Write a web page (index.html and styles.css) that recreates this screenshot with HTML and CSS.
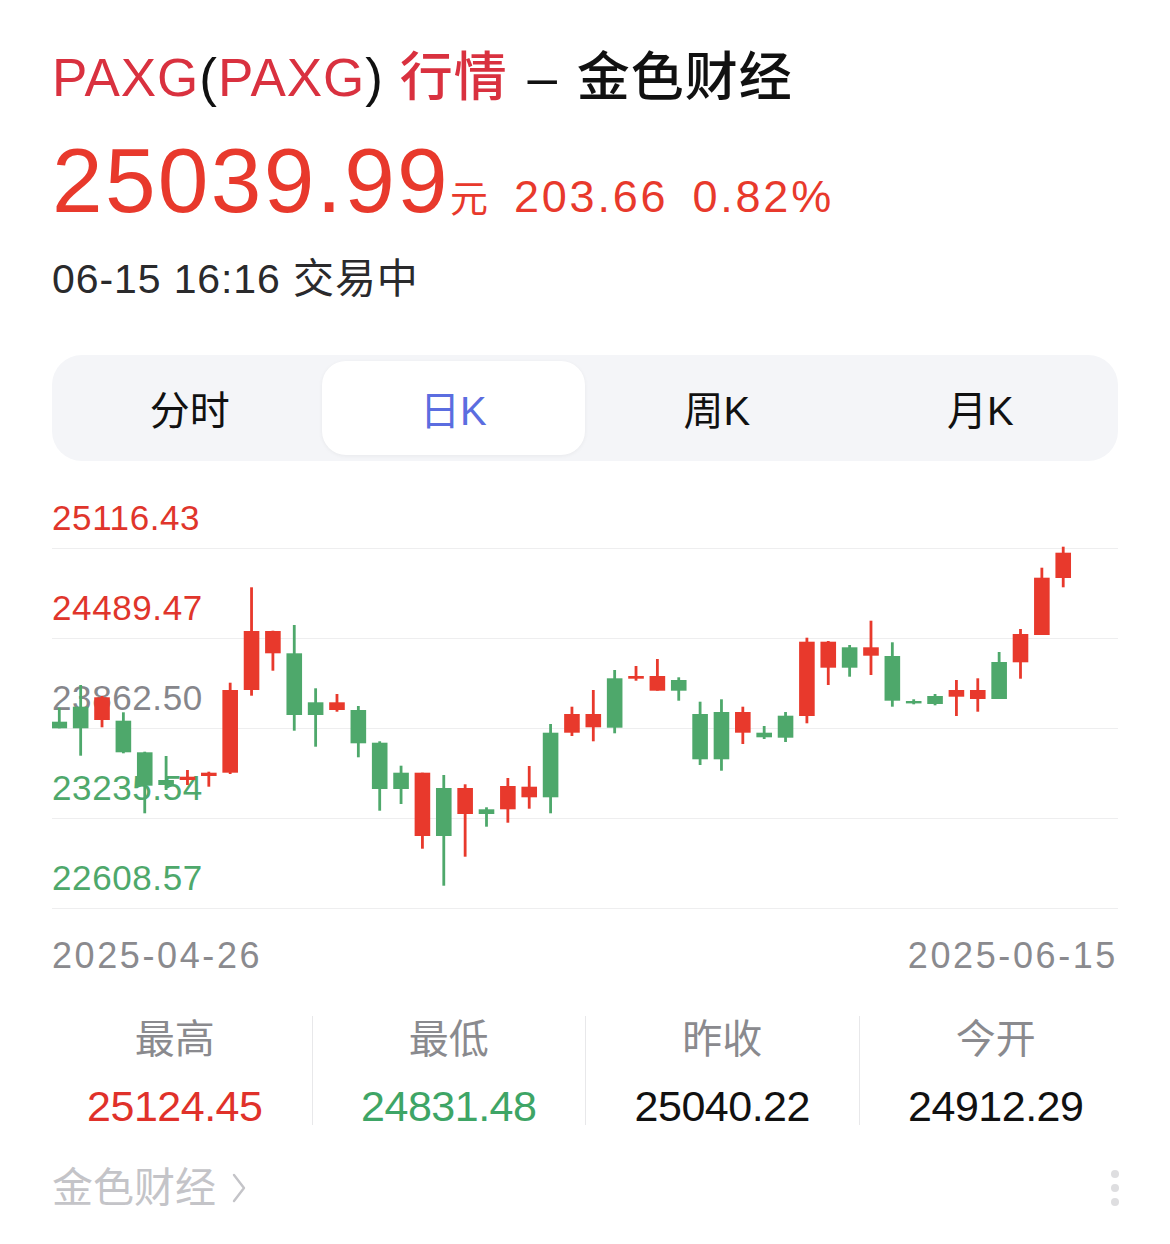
FILE: index.html
```html
<!DOCTYPE html>
<html lang="zh-CN">
<head>
  <meta charset="UTF-8">
  <meta name="viewport" content="width=device-width, initial-scale=1.0">
  <title>PAXG(PAXG) 行情 - 金色财经</title>
  <link rel="stylesheet" href="styles.css">
</head>
<body>
  <div class="page">
    <h1 class="title"><span class="hl">PAXG</span>(<span class="hl">PAXG</span>) <span class="hl">行情</span> <span class="dash">–</span> 金色财经</h1>

    <div class="price-row">
      <span class="price">25039.99</span>
      <span class="unit">元</span>
      <span class="change">203.66</span>
      <span class="change">0.82%</span>
    </div>
    <div class="status">06-15 16:16 交易中</div>

    <div class="tabs">
      <div class="tab">分时</div>
      <div class="tab active">日K</div>
      <div class="tab">周K</div>
      <div class="tab">月K</div>
    </div>

    <div class="chart">
      <div class="row first"><span class="axis up">25116.43</span></div>
      <div class="row"><span class="axis up">24489.47</span></div>
      <div class="row"><span class="axis mid">23862.50</span></div>
      <div class="row"><span class="axis down">23235.54</span></div>
      <div class="row"><span class="axis down">22608.57</span></div>
      <svg id="candles" class="candles" width="1066" height="448" viewBox="52 461 1066 448"></svg>
    </div>

    <div class="dates">
      <span>2025-04-26</span>
      <span>2025-06-15</span>
    </div>

    <div class="stats">
      <div class="stat">
        <div class="stat-label">最高</div>
        <div class="stat-value up">25124.45</div>
      </div>
      <div class="stat">
        <div class="stat-label">最低</div>
        <div class="stat-value down">24831.48</div>
      </div>
      <div class="stat">
        <div class="stat-label">昨收</div>
        <div class="stat-value">25040.22</div>
      </div>
      <div class="stat">
        <div class="stat-label">今开</div>
        <div class="stat-value">24912.29</div>
      </div>
    </div>

    <div class="footer">
      <div class="source">
        金色财经
        <svg class="chevron" width="14" height="30" viewBox="0 0 14 30">
          <polyline points="2,2 12,15 2,28" fill="none" stroke="#c4c4c8" stroke-width="2.4" stroke-linecap="round" stroke-linejoin="round"/>
        </svg>
      </div>
      <div class="more">
        <span class="dot"></span>
        <span class="dot"></span>
        <span class="dot"></span>
      </div>
    </div>
  </div>

  <script>
    // daily candles: [body top, body bottom, wick top, wick bottom, up?]  (y in page px)
    const candles = [
      [721.7, 728.3, 707.7, 728.3, 0],
      [706.7, 728.3, 685, 755.7, 0],
      [697.3, 720, 696, 727.3, 1],
      [720.7, 752.3, 712.3, 753.3, 0],
      [752.3, 785.7, 751.7, 813.3, 0],
      [780, 785, 756, 790, 0],
      [776.7, 780, 770, 785, 1],
      [772.7, 776, 771.7, 786.7, 1],
      [690, 772.7, 682.7, 774, 1],
      [631, 690, 587.3, 695.7, 1],
      [631, 653.3, 630.7, 670.7, 1],
      [653.3, 715, 625, 730.7, 0],
      [702.3, 715, 688.3, 746.7, 0],
      [702.3, 710, 694, 711.7, 1],
      [710, 743.3, 706, 757.3, 0],
      [742.7, 789, 741.3, 810.7, 0],
      [772.7, 789, 765.7, 804, 0],
      [772.7, 836, 772.7, 848.7, 1],
      [788, 836, 775, 885.7, 0],
      [788, 814, 784.3, 856.7, 1],
      [809.3, 814, 807.3, 826.7, 0],
      [786, 809.3, 778, 822.7, 1],
      [786.7, 797.3, 766, 808.7, 1],
      [732.7, 797.3, 724, 813.3, 0],
      [714, 732.7, 706.7, 736, 1],
      [714, 727.3, 690, 741.3, 1],
      [678.3, 727.7, 670, 733.3, 0],
      [676, 678.7, 666, 680.7, 1],
      [676, 690.7, 659, 690.7, 1],
      [680, 690.7, 677.3, 700.7, 0],
      [714, 759.3, 701.7, 765, 0],
      [712, 759.3, 699.3, 770.7, 0],
      [712, 732.7, 706.7, 744, 1],
      [732.7, 737.3, 726, 739, 0],
      [715.7, 737.7, 712, 742, 0],
      [641.7, 716, 637.7, 723.3, 1],
      [641.7, 667.7, 641, 685, 1],
      [647.3, 667.7, 645, 676.7, 0],
      [647.3, 655.7, 620.7, 675, 1],
      [656, 700.7, 642.3, 706.7, 0],
      [701, 703.3, 699.3, 704.3, 0],
      [696, 704, 694, 705.3, 0],
      [690, 696.7, 680, 716, 1],
      [690, 699, 678.3, 711.7, 1],
      [662, 699, 652, 699, 0],
      [634, 662.3, 629, 678.7, 1],
      [577.7, 635, 567.7, 635, 1],
      [552.7, 578, 546.7, 587.3, 1]
    ];

    const svg = document.getElementById('candles');
    const ns = 'http://www.w3.org/2000/svg';
    const step = 21.36;
    const bodyWidth = 15.6;

    candles.forEach(function (c, i) {
      const left = 51.5 + step * i;
      const color = c[4] ? '#e8392c' : '#4ea86b';

      const wick = document.createElementNS(ns, 'rect');
      wick.setAttribute('x', left + bodyWidth / 2 - 1.4);
      wick.setAttribute('y', c[2]);
      wick.setAttribute('width', 2.8);
      wick.setAttribute('height', c[3] - c[2]);
      wick.setAttribute('fill', color);
      svg.appendChild(wick);

      const body = document.createElementNS(ns, 'rect');
      body.setAttribute('x', left);
      body.setAttribute('y', c[0]);
      body.setAttribute('width', bodyWidth);
      body.setAttribute('height', Math.max(c[1] - c[0], 2.4));
      body.setAttribute('fill', color);
      svg.appendChild(body);
    });
  </script>
</body>
</html>
```

FILE: styles.css
```css
body {
  margin: 0;
  padding: 0;
  background: #ffffff;
  font-family: "Liberation Sans", "Noto Sans CJK SC", sans-serif;
  color: #111111;
}

.page {
  padding: 48px 52px 0;
}

.title {
  margin: 0;
  font-size: 53px;
  line-height: 60px;
  font-weight: 500;
  letter-spacing: 1px;
  color: #111111;
}

.title .hl {
  color: #d9313f;
}

.title .dash {
  margin: 0 3px 0 4px;
}

.price-row {
  display: flex;
  align-items: baseline;
  height: 92px;
  margin-top: 27px;
  color: #e8392c;
}

.price {
  font-size: 91px;
  line-height: 92px;
  letter-spacing: 2.3px;
}

.unit {
  font-size: 38px;
  line-height: 40px;
}

.change {
  font-size: 45px;
  line-height: 46px;
  letter-spacing: 2.8px;
  margin-left: 24px;
}

.unit + .change {
  margin-left: 26px;
}

.status {
  margin-top: 28px;
  font-size: 41px;
  line-height: 48px;
  letter-spacing: 0.9px;
  color: #2a2a2c;
}

.tabs {
  display: grid;
  grid-template-columns: repeat(4, 1fr);
  margin-top: 52px;
  padding: 6px;
  height: 106px;
  box-sizing: border-box;
  background: #f4f5f8;
  border-radius: 30px;
}

.tab {
  display: flex;
  align-items: center;
  justify-content: center;
  font-size: 40px;
  color: #111111;
  border-radius: 24px;
}

.tab.active {
  background: #ffffff;
  color: #5b6de0;
  box-shadow: 0 1px 4px rgba(0, 0, 0, 0.05);
}

.chart {
  position: relative;
}

.row {
  display: flex;
  align-items: flex-end;
  height: 90px;
  box-sizing: border-box;
  padding-bottom: 10px;
  border-bottom: 1px solid #eeeeef;
}

.row.first {
  height: 88px;
}

.axis {
  font-size: 35px;
  line-height: 40px;
  letter-spacing: 0.6px;
}

.up {
  color: #e0352b;
}

.mid {
  color: #86868b;
}

.down {
  color: #4ea86b;
}

.candles {
  position: absolute;
  left: 0;
  top: 0;
}

.dates {
  display: flex;
  justify-content: space-between;
  margin-top: 27px;
  font-size: 36px;
  line-height: 40px;
  letter-spacing: 2.6px;
  color: #8a8a8e;
}

.stats {
  display: grid;
  grid-template-columns: repeat(4, 1fr);
  margin: 40px -14px 0;
}

.stat {
  height: 109px;
  text-align: center;
  border-left: 1px solid #e8e8ea;
}

.stat:first-child {
  border-left: none;
}

.stat-label {
  font-size: 40px;
  line-height: 46px;
  color: #8a8a8e;
}

.stat-value {
  margin-top: 25px;
  font-size: 43px;
  line-height: 38px;
  letter-spacing: -0.5px;
  color: #111111;
}

.stat-value.up {
  color: #e0312a;
}

.stat-value.down {
  color: #3ea566;
}

.footer {
  display: flex;
  justify-content: space-between;
  align-items: center;
  margin-top: 39px;
  height: 48px;
}

.source {
  display: flex;
  align-items: center;
  gap: 16px;
  font-size: 41px;
  line-height: 48px;
  color: #c4c4c8;
}

.more {
  display: flex;
  flex-direction: column;
  gap: 6px;
  margin-right: -1px;
}

.dot {
  width: 8px;
  height: 8px;
  border-radius: 50%;
  background: #dedee0;
}
```
